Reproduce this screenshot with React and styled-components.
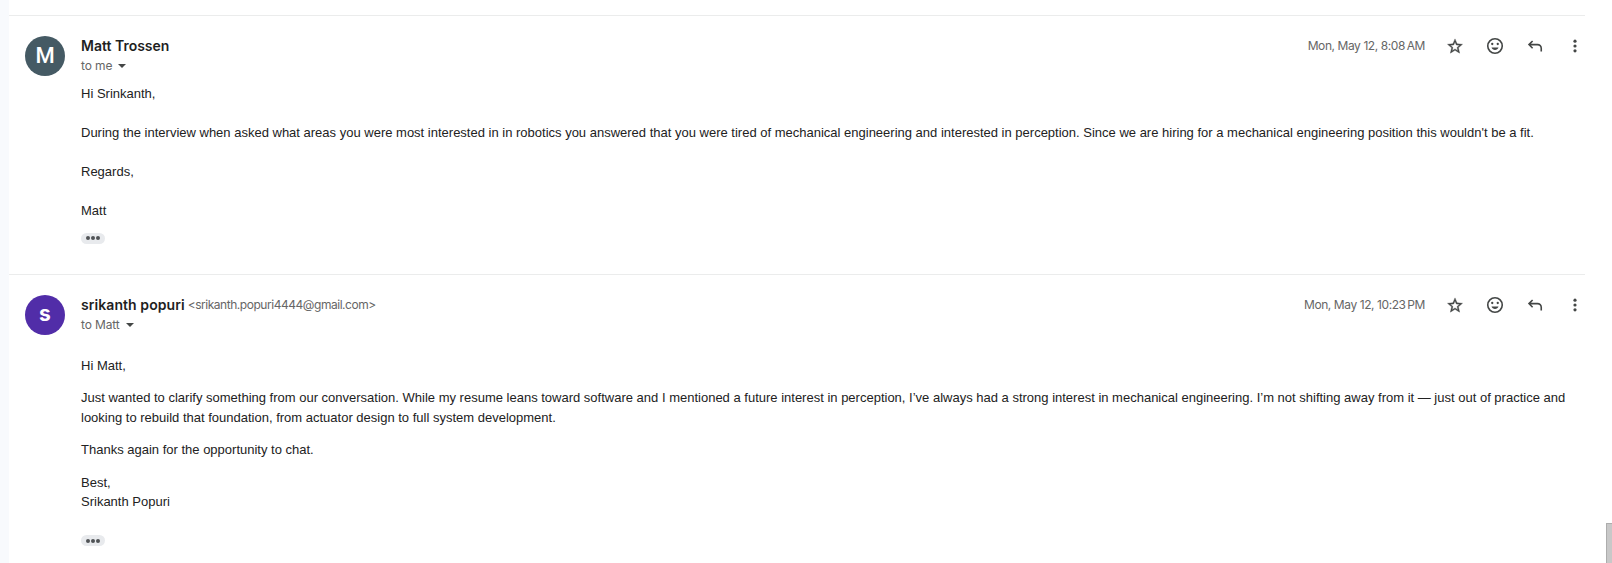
import React from "react";
import styled, { createGlobalStyle } from "styled-components";

const Global = createGlobalStyle`
  * { box-sizing: border-box; }
  html, body { margin: 0; background: #fff; }
  body { overflow: hidden; font-family: "Liberation Sans", Arial, sans-serif; }
`;

const Page = styled.div`
  display: flex;
  position: relative;
  width: 1612px;
  height: 563px;
  overflow: hidden;
  background: #fff;
`;

const Rail = styled.div`
  flex: 0 0 9px;
  background: #f8fafd;
`;

const Thread = styled.main`
  width: 1576px;
  padding-top: 15px;
`;

const Message = styled.article`
  display: flex;
  height: 259px;
  padding: 20px 0 0 16px;
  border-top: 1px solid #ebecec;
`;

const Avatar = styled.div`
  flex: 0 0 40px;
  height: 40px;
  border-radius: 50%;
  display: flex;
  align-items: center;
  justify-content: center;
  color: #fff;
  background: ${(p) => p.$color};
  padding-bottom: ${(p) => p.$lift || 0}px;
  font: ${(p) => p.$weight} ${(p) => p.$size}px/38px ${(p) => p.$family}, sans-serif;
`;

const Content = styled.div`
  flex: 1;
  padding-left: 16px;
`;

const Header = styled.header`
  display: flex;
  height: 20px;
  align-items: center;
  font-family: Inter, sans-serif;
`;

const Sender = styled.span`
  font-size: 14px;
  font-weight: 600;
  line-height: 20px;
  letter-spacing: ${(p) => p.$track}px;
  color: #1f1f1f;
`;

const Address = styled.span`
  margin-left: 3px;
  font-size: 12px;
  line-height: 20px;
  letter-spacing: -0.46px;
  color: #666;
`;

const Stamp = styled.time`
  margin-left: auto;
  margin-right: 10px;
  font-size: 12px;
  line-height: 20px;
  letter-spacing: -0.42px;
  color: #666;
`;

const IconButton = styled.button`
  width: 40px;
  height: 20px;
  padding: 0;
  border: 0;
  background: none;
  color: #444746;
  display: flex;
  align-items: center;
  justify-content: center;
  &:last-child { margin-right: -10px; }
`;

const Recipient = styled.div`
  display: flex;
  align-items: center;
  height: 20px;
  font: 400 12px/20px Inter, sans-serif;
  letter-spacing: -0.12px;
  color: #666;
`;

const Caret = styled.i`
  margin-left: 6px;
  border: 4.5px solid transparent;
  border-top-color: #444746;
  border-bottom: 0;
`;

const Body = styled.div`
  padding-top: ${(p) => p.$top}px;
  font-size: 13px;
  line-height: 19.5px;
  color: #222;
`;

const Line = styled.p`
  margin: 0 0 ${(p) => p.$gap || 0}px;
  white-space: nowrap;
`;

const Trimmed = styled.button`
  display: flex;
  align-items: center;
  justify-content: center;
  gap: 1px;
  width: 24px;
  height: 11px;
  margin-top: ${(p) => p.$top}px;
  padding: 0;
  border: 0;
  border-radius: 5.5px;
  background: #e8eaed;
`;

const Dot = styled.i`
  width: 4px;
  height: 4px;
  border-radius: 50%;
  background: #505356;
`;

const ScrollThumb = styled.div`
  position: absolute;
  right: 0;
  bottom: 0;
  width: 6px;
  height: 40px;
  background: #c8c8c8;
  border: solid #adadad;
  border-width: 1px 0 0 1px;
`;

const Actions = () => (
  <>
    <IconButton aria-label="Star">
      <svg width="18" height="18" viewBox="0 0 24 24" fill="currentColor" stroke="currentColor" strokeWidth="0.5">
        <path d="M22 9.74l-7.19-.62L12 2.5 9.19 9.13 2 9.74l5.46 4.73L5.82 21.5 12 17.77 18.18 21.5l-1.63-7.03L22 9.74zM12 15.9l-3.76 2.27 1-4.28-3.32-2.88 4.38-.38L12 6.6l1.71 4.04 4.38.38-3.32 2.88 1 4.28L12 15.9z" />
      </svg>
    </IconButton>
    <IconButton aria-label="Add reaction">
      <svg width="20" height="20" viewBox="0 0 20 20" fill="currentColor">
        <circle cx="10" cy="10" r="7.25" fill="none" stroke="currentColor" strokeWidth="1.6" />
        <circle cx="7.25" cy="8" r="1.15" />
        <circle cx="12.75" cy="8" r="1.15" />
        <path d="M6.5 11.5h7c-.5 1.5-1.8 2.5-3.5 2.5s-3-1-3.5-2.5z" />
      </svg>
    </IconButton>
    <IconButton aria-label="Reply">
      <svg width="20" height="20" viewBox="0 0 20 20" fill="none" stroke="currentColor" strokeWidth="1.6">
        <path d="M7.6 5L4 8.6l3.6 3.6M4 8.6h8.5c2.1 0 3.75 1.65 3.75 3.75V15.5" />
      </svg>
    </IconButton>
    <IconButton aria-label="More">
      <svg width="20" height="20" viewBox="0 0 20 20" fill="currentColor">
        <circle cx="10" cy="5.2" r="1.6" />
        <circle cx="10" cy="10" r="1.6" />
        <circle cx="10" cy="14.8" r="1.6" />
      </svg>
    </IconButton>
  </>
);

const Ellipsis = ({ top }) => (
  <Trimmed $top={top} aria-label="Show trimmed content">
    <Dot />
    <Dot />
    <Dot />
  </Trimmed>
);

export default function App() {
  return (
    <Page>
      <Global />
      <Rail />
      <Thread>
        <Message>
          <Avatar $color="#455a64" $family="Roboto" $weight={500} $size={22}>M</Avatar>
          <Content>
            <Header>
              <Sender $track={0}>Matt Trossen</Sender>
              <Stamp>Mon, May 12, 8:08{"\u202f"}AM</Stamp>
              <Actions />
            </Header>
            <Recipient>to me<Caret /></Recipient>
            <Body $top={8}>
              <Line $gap={19.5}>Hi Srinkanth,</Line>
              <Line $gap={19.5}>During the interview when asked what areas you were most interested in in robotics you answered that you were tired of mechanical engineering and interested in perception. Since we are hiring for a mechanical engineering position this wouldn't be a fit.</Line>
              <Line $gap={19.5}>Regards,</Line>
              <Line>Matt</Line>
            </Body>
            <Ellipsis top={12} />
          </Content>
        </Message>
        <Message>
          <Avatar $color="#512da8" $family="Inter" $weight={700} $size={21} $lift={2}>s</Avatar>
          <Content>
            <Header>
              <Sender $track={0.07}>srikanth popuri</Sender>
              <Address>&lt;srikanth.popuri4444@gmail.com&gt;</Address>
              <Stamp>Mon, May 12, 10:23{"\u202f"}PM</Stamp>
              <Actions />
            </Header>
            <Recipient>to Matt<Caret /></Recipient>
            <Body $top={20.75}>
              <Line $gap={13}>Hi Matt,</Line>
              <Line>Just wanted to clarify something from our conversation. While my resume leans toward software and I mentioned a future interest in perception, I’ve always had a strong interest in mechanical engineering. I’m not shifting away from it — just out of practice and</Line>
              <Line $gap={13}>looking to rebuild that foundation, from actuator design to full system development.</Line>
              <Line $gap={13}>Thanks again for the opportunity to chat.</Line>
              <Line>Best,</Line>
              <Line>Srikanth Popuri</Line>
            </Body>
            <Ellipsis top={23.25} />
          </Content>
        </Message>
      </Thread>
      <ScrollThumb />
    </Page>
  );
}
